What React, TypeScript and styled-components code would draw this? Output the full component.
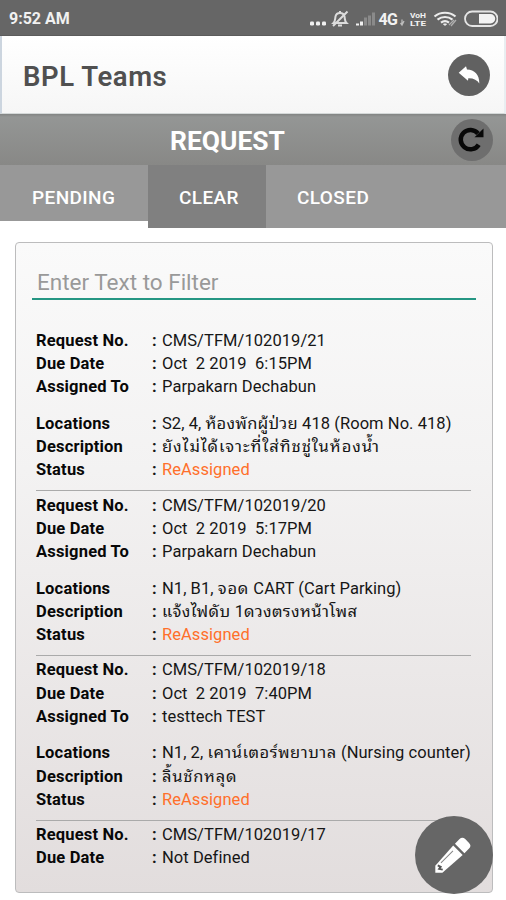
import React from "react";
import styled, { createGlobalStyle } from "styled-components";

const GlobalStyle = createGlobalStyle`
  * { box-sizing: border-box; }
  body { margin: 0; background: #fff; font-family: Roboto, "Noto Sans", "Noto Sans Thai", sans-serif; }
`;

const Screen = styled.div`
  position: relative;
  width: 506px;
  height: 900px;
  overflow: hidden;
  background: #fff;
`;

const StatusBar = styled.header`
  height: 36px;
  display: flex;
  align-items: center;
  justify-content: space-between;
  padding: 2px 8px 0 9px;
  background: #666;
  border-bottom: 1px solid #5c5c5c;
  color: #f1f1f1;
`;

const Clock = styled.span`
  font-size: 16px;
  font-weight: 700;
  letter-spacing: 0;
`;

const StatusIcons = styled.svg`
  display: block;
  width: 202px;
  height: 34px;
`;

const AppBar = styled.div`
  height: 78px;
  display: flex;
  align-items: center;
  justify-content: space-between;
  padding: 0 14px 0 21px;
  border-left: 2px solid #ccd5df;
  border-right: 2px solid #e9eef1;
  border-bottom: 1px solid #d4d8d8;
  background: linear-gradient(#fff, #f6f6f6);
`;

const AppTitle = styled.h1`
  margin: 4px 0 0;
  font-size: 27.5px;
  line-height: 32px;
  font-weight: 600;
  letter-spacing: 0.55px;
  color: #505050;
`;

const RoundButton = styled.button<{ $bg: string }>`
  width: 42px;
  height: 42px;
  padding: 0;
  border: 0;
  border-radius: 50%;
  background: ${(p) => p.$bg};
  svg { display: block; }
`;

const SectionBar = styled.div`
  height: 51px;
  display: grid;
  grid-template-columns: 42px 1fr 42px;
  align-items: center;
  padding: 0 13px;
  background: linear-gradient(#828483 0, #949695 3px, #888886 100%);
`;

const SectionTitle = styled.h2`
  grid-column: 2;
  margin: 3px 51px 0 0;
  text-align: center;
  font-size: 26.4px;
  line-height: 32px;
  font-weight: 700;
  color: #fff;
`;

const Tabs = styled.nav`
  height: 63px;
  display: flex;
  align-items: flex-start;
`;

const Tab = styled.button<{ $width: number; $height: number; $inset: number; $active?: boolean }>`
  width: ${(p) => p.$width}px;
  height: ${(p) => p.$height}px;
  padding: 21px 0 0 ${(p) => p.$inset}px;
  display: flex;
  align-items: flex-start;
  border: 0;
  background: ${(p) => (p.$active ? "#808080" : "#989898")};
  color: #fff;
  font: 500 19px/24px Roboto, sans-serif;
  letter-spacing: 0.4px;
`;

const Panel = styled.main`
  width: 478px;
  height: 651px;
  margin: 14px 0 0 15px;
  padding: 21px 16px 0;
  border: 1px solid #bcbcbd;
  border-radius: 4px;
  background: linear-gradient(#fafafa, #f3f2f2 35%, #e2dddd);
`;

const Filter = styled.input`
  display: block;
  width: 444px;
  height: 36px;
  padding: 2px 5px 0;
  border: 0;
  border-bottom: 2px solid #259683;
  border-radius: 0;
  outline: 0;
  background: transparent;
  font: 400 22.5px Roboto, sans-serif;
  &::placeholder { color: #999; opacity: 1; }
`;

const List = styled.div`
  margin: 29px 0 0 4px;
  width: 435px;
`;

const Request = styled.section`
  height: 164.7px;
`;

const Group = styled.dl`
  margin: 0 0 13.5px;
`;

const Row = styled.div`
  display: grid;
  grid-template-columns: 116px 10px 1fr;
  height: 23.2px;
  line-height: 23.2px;
  font-size: 16.5px;
  letter-spacing: 0.06px;
  color: #161616;
  white-space: pre;
`;

const Label = styled.dt`
  font-weight: 700;
  letter-spacing: 0.18px;
  color: #080808;
`;

const Colon = styled.span`
  font-weight: 700;
`;

const Value = styled.dd<{ $status?: boolean }>`
  margin: 0;
  color: ${(p) => (p.$status ? "#ff6f2a" : "inherit")};
`;

const Thai = styled.span<{ $spacing: number }>`
  font-family: "Noto Sans Thai Looped", "Noto Looped Thai", Loma, Waree, Garuda, Roboto, "Noto Sans", sans-serif;
  line-height: 0;
  letter-spacing: ${(p) => p.$spacing}px;
`;

const Divider = styled.hr`
  height: 1px;
  margin: -5px 0 0;
  border: 0;
  background: #aaa;
`;

const ComposeButton = styled.button`
  position: absolute;
  left: 415px;
  top: 816px;
  width: 78px;
  height: 78px;
  padding: 0;
  border: 0;
  border-radius: 50%;
  background: #666;
  svg { display: block; }
`;

type Field = { label: string; value: string; spacing?: number };

const requests: { head: Field[]; body: Field[] }[] = [
  {
    head: [
      { label: "Request No.", value: "CMS/TFM/102019/21" },
      { label: "Due Date", value: "Oct  2 2019  6:15PM" },
      { label: "Assigned To", value: "Parpakarn Dechabun" },
    ],
    body: [
      { label: "Locations", value: "S2, 4, ห้องพักผู้ป่วย 418 (Room No. 418)", spacing: 0.25 },
      { label: "Description", value: "ยังไม่ได้เจาะที่ใส่ทิชชู่ในห้องน้ำ", spacing: 0.95 },
      { label: "Status", value: "ReAssigned" },
    ],
  },
  {
    head: [
      { label: "Request No.", value: "CMS/TFM/102019/20" },
      { label: "Due Date", value: "Oct  2 2019  5:17PM" },
      { label: "Assigned To", value: "Parpakarn Dechabun" },
    ],
    body: [
      { label: "Locations", value: "N1, B1, จอด CART (Cart Parking)", spacing: 0.8 },
      { label: "Description", value: "แจ้งไฟดับ 1ดวงตรงหน้าโพส", spacing: 0.4 },
      { label: "Status", value: "ReAssigned" },
    ],
  },
  {
    head: [
      { label: "Request No.", value: "CMS/TFM/102019/18" },
      { label: "Due Date", value: "Oct  2 2019  7:40PM" },
      { label: "Assigned To", value: "testtech TEST" },
    ],
    body: [
      { label: "Locations", value: "N1, 2, เคาน์เตอร์พยาบาล (Nursing counter)", spacing: 0.5 },
      { label: "Description", value: "ลิ้นชักหลุด", spacing: 0.75 },
      { label: "Status", value: "ReAssigned" },
    ],
  },
  {
    head: [
      { label: "Request No.", value: "CMS/TFM/102019/17" },
      { label: "Due Date", value: "Not Defined" },
    ],
    body: [],
  },
];

function FieldText({ value, spacing = 0.5 }: { value: string; spacing?: number }) {
  return (
    <>
      {value.split(/([\u0E00-\u0E7F]+)/).map((part, i) =>
        i % 2 ? <Thai key={i} $spacing={spacing}>{part}</Thai> : part
      )}
    </>
  );
}

function Fields({ items }: { items: Field[] }) {
  return (
    <Group>
      {items.map((f) => (
        <Row key={f.label}>
          <Label>{f.label}</Label>
          <Colon>:</Colon>
          <Value $status={f.label === "Status"}>
            <FieldText value={f.value} spacing={f.spacing} />
          </Value>
        </Row>
      ))}
    </Group>
  );
}

function SystemIcons() {
  return (
    <StatusIcons viewBox="296 1 202 34" fill="none" stroke="#f0f0f0">
      <g fill="#f0f0f0" stroke="none">
        <rect x="310" y="20.500" width="4" height="4" rx="1.200" />
        <rect x="316" y="20.500" width="4" height="4" rx="1.200" />
        <rect x="322" y="20.500" width="4" height="4" rx="1.200" />
      </g>
      <g stroke="#dcdcdc" strokeWidth="2">
        <path d="M333.500 22c2-2 1.500-4 2-6.500.5-2.500 2-3.500 4.500-3.500s4 1 4.500 3.500c.5 2.500 0 4.500 2 6.500z" />
        <path d="M338 24.500h4M333 25l14.500-14.500M340 12v-2" />
      </g>
      <g stroke="none">
        <path d="M356 24.500v-2h3v2z M360 24.500v-4h3v4z" fill="#f0f0f0" />
        <path d="M364 24.500v-8h3v8z M368 24.500v-10h3v10z M372 24.500v-13h3v13z" fill="#8a8a8a" />
      </g>
      <g fill="#f2f2f2" stroke="none" fontFamily="Roboto, sans-serif">
        <text x="378.500" y="24" fontSize="16" fontWeight="700" textLength="19.500">4G</text>
        <text x="410" y="16.800" fontSize="7.500" fontWeight="700" textLength="16" lengthAdjust="spacingAndGlyphs">VoH</text>
        <text x="410" y="25" fontSize="7.500" fontWeight="700" textLength="16" lengthAdjust="spacingAndGlyphs">LTE</text>
      </g>
      <path d="M402 18.500v5m-1.500-1.500 1.500 2 2-4" stroke="#bdbdbd" strokeWidth="1.300" />
      <g strokeWidth="2.200">
        <path d="M434.500 15.500c6-5 15-5 21 0M437.500 18.700c4.500-3.600 10.500-3.600 15 0M441 21.700c2.300-1.800 5.700-1.800 8 0" stroke="#ececec" />
        <path d="m443.500 23 1.500 1.500 1.500-1.500z" fill="#ececec" strokeWidth="1" />
        <path d="m449 24 5-5M451 25l5-6" stroke="#b0b0b0" strokeWidth="1.200" />
      </g>
      <rect x="465" y="10.500" width="32.500" height="14.500" rx="7.200" stroke="#e5e5e5" strokeWidth="1.800" />
      <path d="M479 13h11.500a4.700 4.700 0 0 1 0 9.400h-11.500z" fill="#f3f3f3" stroke="none" />
    </StatusIcons>
  );
}

export default function App() {
  return (
    <Screen>
      <GlobalStyle />
      <StatusBar>
        <Clock>9:52 AM</Clock>
        <SystemIcons />
      </StatusBar>
      <AppBar>
        <AppTitle>BPL Teams</AppTitle>
        <RoundButton $bg="#616161" aria-label="Back">
          <svg viewBox="0 0 42 42" width="42" height="42">
            <path d="M10.700 18.700 18 12.300l1 3.200c7.500.3 12.500 5 12.300 14-2-3.500-6-5.500-11-5.300l-.3 2.600z" fill="#fff" />
          </svg>
        </RoundButton>
      </AppBar>
      <SectionBar>
        <SectionTitle>REQUEST</SectionTitle>
        <RoundButton $bg="#6e6e6e" aria-label="Refresh">
          <svg viewBox="0 0 42 42" width="42" height="42">
            <path d="M27.700 25.700A9.700 9.700 0 1 1 27 14.500" fill="none" stroke="#080808" strokeWidth="4.500" />
            <path d="M32.500 9.500v8.700h-9z" fill="#080808" />
          </svg>
        </RoundButton>
      </SectionBar>
      <Tabs>
        <Tab $width={148} $height={56} $inset={32}>PENDING</Tab>
        <Tab $width={118} $height={63} $inset={31} $active>CLEAR</Tab>
        <Tab $width={240} $height={63} $inset={31}>CLOSED</Tab>
      </Tabs>
      <Panel>
        <Filter placeholder="Enter Text to Filter" />
        <List>
          {requests.map((r) => (
            <Request key={r.head[0].value}>
              <Fields items={r.head} />
              {r.body.length > 0 && (
                <>
                  <Fields items={r.body} />
                  <Divider />
                </>
              )}
            </Request>
          ))}
        </List>
      </Panel>
      <ComposeButton aria-label="Edit">
        <svg viewBox="0 0 78 78" width="78" height="78">
          <g transform="translate(20.300 56.800) rotate(-45)">
            <path d="M0 0 5-5 32-6.700V6.700L5 5z" fill="#fff" />
            <path d="M34.500-6.700h6.500a4 4 0 0 1 4 4v5.400a4 4 0 0 1-4 4h-6.500z" fill="#fff" />
            <path d="M11-3H28" stroke="#858585" strokeWidth="1" />
            <path d="M7-3.500 8-.5 5.500 0 7.500 3" fill="none" stroke="#555" strokeWidth="2" />
          </g>
        </svg>
      </ComposeButton>
    </Screen>
  );
}
